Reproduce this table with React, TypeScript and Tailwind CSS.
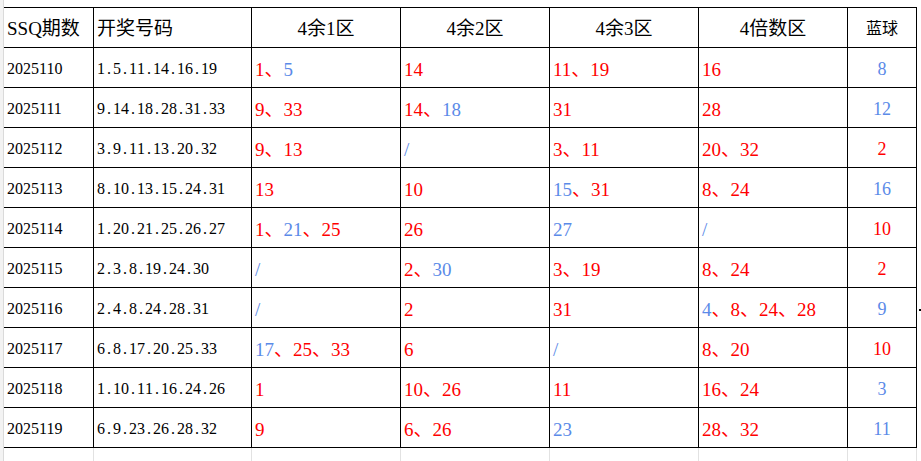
import React from 'react'

// 双色球 4余数分区表
type Row = {
  issue: string
  draw: string
  zones: string[] // tokens split by 、, prefix b: = blue
  blue: string
  blueColor: 'r' | 'b'
}

const rows: Row[] = [
  { issue: '2025110', draw: '1.5.11.14.16.19', zones: ['1、b:5', '14', '11、19', '16'], blue: '8', blueColor: 'b' },
  { issue: '2025111', draw: '9.14.18.28.31.33', zones: ['9、33', '14、b:18', '31', '28'], blue: '12', blueColor: 'b' },
  { issue: '2025112', draw: '3.9.11.13.20.32', zones: ['9、13', 'b:/', '3、11', '20、32'], blue: '2', blueColor: 'r' },
  { issue: '2025113', draw: '8.10.13.15.24.31', zones: ['13', '10', 'b:15、31', '8、24'], blue: '16', blueColor: 'b' },
  { issue: '2025114', draw: '1.20.21.25.26.27', zones: ['1、b:21、25', '26', 'b:27', 'b:/'], blue: '10', blueColor: 'r' },
  { issue: '2025115', draw: '2.3.8.19.24.30', zones: ['b:/', '2、b:30', '3、19', '8、24'], blue: '2', blueColor: 'r' },
  { issue: '2025116', draw: '2.4.8.24.28.31', zones: ['b:/', '2', '31', 'b:4、8、24、28'], blue: '9', blueColor: 'b' },
  { issue: '2025117', draw: '6.8.17.20.25.33', zones: ['b:17、25、33', '6', 'b:/', '8、20'], blue: '10', blueColor: 'r' },
  { issue: '2025118', draw: '1.10.11.16.24.26', zones: ['1', '10、26', '11', '16、24'], blue: '3', blueColor: 'b' },
  { issue: '2025119', draw: '6.9.23.26.28.32', zones: ['9', '6、26', 'b:23', '28、32'], blue: '11', blueColor: 'b' },
]

const RED = 'text-[#ff0000]'
const BLUE = 'text-[#5b8ae8]'
const cell = 'h-[40px] pt-[3px] border-r border-b border-black flex items-center'

function Zone({ value }: { value: string }) {
  const parts = value.split('、')
  return (
    <span className="text-[19px] leading-none">
      {parts.map((p, i) => {
        const isBlue = p.startsWith('b:')
        const t = isBlue ? p.slice(2) : p
        return (
          <React.Fragment key={i}>
            {i > 0 && <span className={RED}>、</span>}
            <span className={isBlue ? BLUE : RED}>{t}</span>
          </React.Fragment>
        )
      })}
    </span>
  )
}

function Draw({ value }: { value: string }) {
  return (
    <span className="text-[16px] leading-none">
      {value.split('').map((c, i) => (
        <span key={i} className="inline-block w-[8px] text-center">
          {c}
        </span>
      ))}
    </span>
  )
}

export default function App() {
  return (
    <div className="relative w-[921px] h-[461px] bg-white flex overflow-hidden font-['Liberation_Serif','Noto_Sans_CJK_SC',serif] text-black">
      <div className="w-[4px] shrink-0 bg-[#f3f3f3] border-r border-[#dadada]" />
      <div className="flex flex-col">
        <div className="h-[7px]" />
        <div className="grid grid-cols-[90px_158px_149px_149px_149px_149px_69px] border-t border-black">
          {/* header */}
          <div className={`${cell} pl-[3px] text-[19px]`}>SSQ期数</div>
          <div className={`${cell} pl-[3px] text-[19px]`}>开奖号码</div>
          <div className={`${cell} justify-center text-[19px]`}>4余1区</div>
          <div className={`${cell} justify-center text-[19px]`}>4余2区</div>
          <div className={`${cell} justify-center text-[19px]`}>4余3区</div>
          <div className={`${cell} justify-center text-[19px]`}>4倍数区</div>
          <div className={`${cell} justify-center text-[16px]`}>蓝球</div>

          {rows.map((r) => (
            <React.Fragment key={r.issue}>
              <div className={`${cell} pl-[3px] text-[16px]`}>{r.issue}</div>
              <div className={`${cell} pl-[3px]`}>
                <Draw value={r.draw} />
              </div>
              {r.zones.map((z, i) => (
                <div key={i} className={`${cell} pl-[3px]`}>
                  <Zone value={z} />
                </div>
              ))}
              <div className={`${cell} justify-center text-[18px] ${r.blueColor === 'b' ? BLUE : RED}`}>
                {r.blue}
              </div>
            </React.Fragment>
          ))}
        </div>
        {/* sheet gridlines below the table */}
        <div className="grid grid-cols-[90px_158px_149px_149px_149px_149px_69px] h-[13px]">
          {[0, 1, 2, 3, 4, 5, 6].map((i) => (
            <div key={i} className="border-r border-[#e2e2e2]" />
          ))}
        </div>
      </div>
      <div className="absolute left-[919px] top-[309px] w-[2px] h-[2px] bg-black" />
    </div>
  )
}
